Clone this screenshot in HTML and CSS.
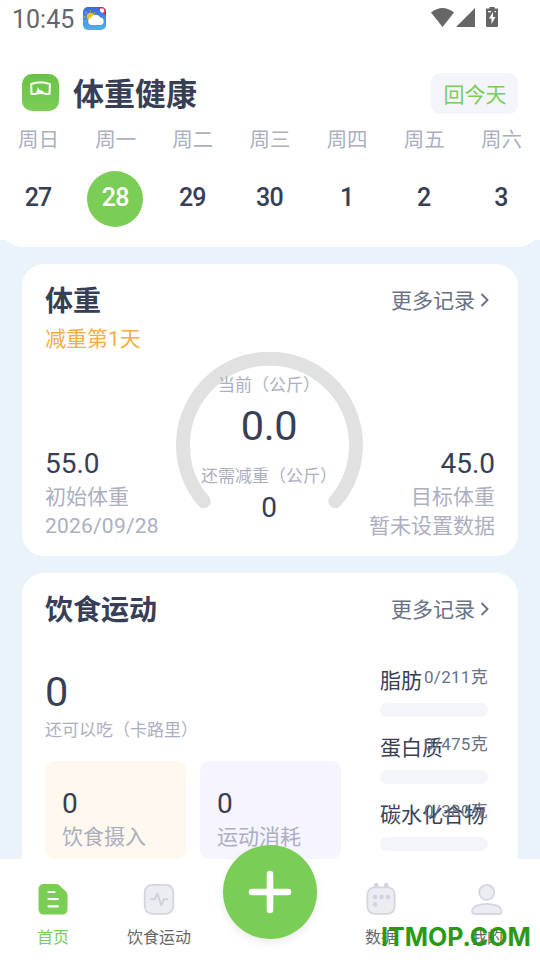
FILE: index.html
```html
<!DOCTYPE html>
<html lang="zh-CN">
<head>
<meta charset="utf-8">
<title>体重健康</title>
<link rel="stylesheet" href="styles.css">
</head>
<body>
<div class="app">
  <header class="top">
    <div class="status">
      <span class="clock">10:45</span>
      <svg class="weather" width="23" height="23" viewBox="0 0 23 23">
        <defs>
          <linearGradient id="sky" x1="0" y1="0" x2="0" y2="1"><stop offset="0" stop-color="#3a68e6"/><stop offset="1" stop-color="#4fb2f3"/></linearGradient>
          <clipPath id="tile"><rect width="23" height="23" rx="5"/></clipPath>
        </defs>
        <g clip-path="url(#tile)">
          <rect width="23" height="23" fill="url(#sky)"/>
          <path d="M14.500 0H23v9z" fill="#e3203a"/>
          <path d="M17 1.500h3.500l1 3-2 1.500-2.500-1.500z" fill="#fff"/>
          <circle cx="7.500" cy="9.500" r="3.700" fill="#f6c400"/>
          <path d="M7.500 3.200v1.300M2.600 5l1 1M1 9.800h1.500M2.300 14.500l1.200-1M11.800 5.200l-.8.8" stroke="#e0b62a" stroke-width="1.100"/>
          <path d="M8.500 18a3.500 3.500 0 0 1-.6-6.900A5.200 5.200 0 0 1 17.400 10.600 3.800 3.800 0 0 1 18 18z" fill="#fff"/>
        </g>
      </svg>
      <svg class="signals" width="70" height="21" viewBox="0 0 70 21">
        <g fill="#666">
          <path d="M0 5.500Q11.500-3.500 23 5.500L11.500 20z"/>
          <path d="M44 1v19H25z"/>
          <path d="M58.500 0h5v1.500H66a1 1 0 0 1 1 1V19a1 1 0 0 1-1 1H56a1 1 0 0 1-1-1V2.500a1 1 0 0 1 1-1h2.500z"/>
        </g>
        <path d="M62 5v5h2.500L60.500 17v-5.500H58zM57 4h3v1.200h-3zM63.500 4h1.500v1.200h-1.500z" fill="#fff"/>
      </svg>
    </div>
    <div class="brand">
      <svg class="logo" width="37" height="37" viewBox="0 0 37 37">
        <defs><linearGradient id="leaf" x1="0" y1="0" x2="0" y2="1"><stop offset="0" stop-color="#68c344"/><stop offset="1" stop-color="#7bce58"/></linearGradient></defs>
        <rect width="37" height="37" rx="10" fill="url(#leaf)"/>
        <path d="M9.100 10Q18.500 6.900 27.900 10L27.500 20H24Q18.500 17.800 13 20H9.500z" fill="none" stroke="#f1faec" stroke-width="2.200" stroke-linejoin="round"/>
        <path d="M14 18L15.300 16.300 15.700 13 18 16.200 20.500 16.800 21.500 18z" fill="#fff"/>
      </svg>
      <h1>体重健康</h1>
      <button class="today">回今天</button>
    </div>
    <div class="week">
      <div class="day"><span>周日</span><b>27</b></div>
      <div class="day active"><span>周一</span><b>28</b></div>
      <div class="day"><span>周二</span><b>29</b></div>
      <div class="day"><span>周三</span><b>30</b></div>
      <div class="day"><span>周四</span><b>1</b></div>
      <div class="day"><span>周五</span><b>2</b></div>
      <div class="day"><span>周六</span><b>3</b></div>
    </div>
  </header>

  <main class="content">
    <section class="card weight">
      <div class="card-head">
        <h2>体重</h2>
        <a class="more">更多记录<svg width="10" height="14" viewBox="0 0 10 14"><path d="M1.500 1l6 6-6 6" fill="none" stroke="#697186" stroke-width="1.900"/></svg></a>
      </div>
      <div class="streak">减重第1天</div>
      <div class="weight-row">
        <div class="side">
          <span class="num">55.0</span>
          <span class="cap">初始体重</span>
          <span class="cap date">2026/09/28</span>
        </div>
        <div class="gauge">
          <svg class="arc" width="188" height="160" viewBox="0 0 188 160"><path d="M27.700 149.300A86.500 86.500 0 1 1 159.300 149.300" fill="none" stroke="#e1e1e1" stroke-width="14" stroke-linecap="round"/></svg>
          <div class="gauge-text">
            <span class="small">当前（公斤）</span>
            <span class="big">0.0</span>
            <span class="small second">还需减重（公斤）</span>
            <span class="num left">0</span>
          </div>
        </div>
        <div class="side right">
          <span class="num">45.0</span>
          <span class="cap">目标体重</span>
          <span class="cap">暂未设置数据</span>
        </div>
      </div>
    </section>

    <section class="card diet">
      <div class="card-head">
        <h2>饮食运动</h2>
        <a class="more">更多记录<svg width="10" height="14" viewBox="0 0 10 14"><path d="M1.500 1l6 6-6 6" fill="none" stroke="#697186" stroke-width="1.900"/></svg></a>
      </div>
      <div class="diet-row">
        <div class="energy">
          <span class="big">0</span>
          <span class="small">还可以吃（卡路里）</span>
          <div class="tiles">
            <div class="tile intake"><span class="num">0</span><span class="cap">饮食摄入</span></div>
            <div class="tile burn"><span class="num">0</span><span class="cap">运动消耗</span></div>
          </div>
        </div>
        <div class="macros">
          <div class="macro"><span class="name">脂肪</span><span class="value">0/211克</span><div class="bar"></div></div>
          <div class="macro"><span class="name">蛋白质</span><span class="value">0/475克</span><div class="bar"></div></div>
          <div class="macro"><span class="name">碳水化合物</span><span class="value">0/380克</span><div class="bar"></div></div>
        </div>
      </div>
    </section>
  </main>

  <nav class="tabs">
    <a class="tab on">
      <svg width="32" height="34" viewBox="0 0 32 34"><path d="M7 2H18.500Q21 2 22.500 3.400L29 9.500Q30.500 11 30.500 13V27Q30.500 32.500 25 32.500H7Q1.500 32.500 1.500 27V7.500Q1.500 2 7 2z" fill="#7acd55"/><path d="M11.500 10h6M11.500 17h9.500M11.500 24.300h9.500" stroke="#fff" stroke-width="2.200" stroke-linecap="round"/></svg>
      <span>首页</span>
    </a>
    <a class="tab">
      <svg width="32" height="34" viewBox="0 0 32 34"><rect x="1.700" y="2.800" width="28.600" height="29" rx="7.500" fill="#ecedf3" stroke="#d3d5e1" stroke-width="1.800"/><path d="M8 17.300h3.600l2.700-6 4 12 2.600-6h3.400" fill="none" stroke="#cfd1de" stroke-width="2" stroke-linecap="round" stroke-linejoin="round"/></svg>
      <span>饮食运动</span>
    </a>
    <div class="fab-slot">
      <button class="fab"><svg width="44" height="44" viewBox="0 0 44 44"><path d="M22 4v36M4 22h36" stroke="#fff" stroke-width="6.600" stroke-linecap="round"/></svg></button>
    </div>
    <a class="tab">
      <svg width="32" height="34" viewBox="0 0 32 34"><path d="M11.300 3v5M21.300 3v5" stroke="#d3d5e1" stroke-width="4.600" stroke-linecap="round"/><rect x="2.400" y="5.400" width="27.200" height="26.400" rx="7" fill="#ecedf3" stroke="#d3d5e1" stroke-width="1.800"/><g fill="#d0d2df"><circle cx="10" cy="15" r="2.300"/><circle cx="16.500" cy="15" r="2.300"/><circle cx="23" cy="15" r="2.300"/><circle cx="10" cy="22.400" r="2.300"/></g></svg>
      <span>数据</span>
    </a>
    <a class="tab">
      <svg width="32" height="34" viewBox="0 0 32 34"><g fill="#ecedf3" stroke="#d3d5e1" stroke-width="1.800"><circle cx="15.700" cy="10.300" r="7.500"/><path d="M4 32Q1 32 1.200 28.500C1.600 24.500 8 21.800 15.800 21.800S30 24.500 30.400 28.500Q30.600 32 27.600 32z"/></g></svg>
      <span>我的</span>
    </a>
    <div class="mark">ITMOP.COM</div>
  </nav>
</div>
</body>
</html>
```
FILE: styles.css
```css
* { box-sizing: border-box; margin: 0; padding: 0; }

body {
  width: 540px;
  height: 960px;
  overflow: hidden;
  background: #fff;
  color: #373e55;
  font-family: Roboto, "Noto Sans CJK SC", sans-serif;
}

svg { display: block; flex: none; }
button { border: 0; font-family: inherit; }

.app {
  display: flex;
  flex-direction: column;
  height: 960px;
  background: linear-gradient(#fff 240px, #eaf3fa 240px);
}

/* Header */
.top {
  height: 247px;
  flex: none;
  background: #fff;
  border-radius: 0 0 22px 22px;
}
.status {
  display: flex;
  height: 73px;
  padding: 7px 39px 0 12px;
}
.clock {
  width: 71px;
  font-size: 25px;
  line-height: 25px;
  color: #666;
}
.signals { margin-left: auto; }
.brand {
  display: flex;
  height: 41px;
  padding: 0 22px;
}
.logo { margin-top: 1px; }
.brand h1 {
  margin-left: 14px;
  font-size: 31px;
  font-weight: 700;
  line-height: 43px;
}
.today {
  width: 87px;
  height: 41px;
  margin-left: auto;
  padding: 3px 0 0 1px;
  border-radius: 9px;
  background: #f4f5fa;
  color: #7acd55;
  font-size: 21px;
  line-height: 38px;
}
.week { display: flex; }
.day {
  display: flex;
  flex-direction: column;
  align-items: center;
  width: 77.200px;
  height: 113px;
}
.day span {
  font-size: 20.500px;
  line-height: 52px;
  color: #abafc0;
}
.day b {
  width: 56px;
  height: 56px;
  margin: 5px 1px 0 0;
  border-radius: 50%;
  font-size: 25px;
  font-weight: 500;
  letter-spacing: -.8px;
  line-height: 53px;
  text-align: center;
}
.day.active b { background: #7acd55; color: #fff; }

/* Cards */
.content {
  display: flex;
  flex-direction: column;
  gap: 17px;
  height: 612px;
  padding: 17px 22px 0;
  overflow: hidden;
}
.card {
  flex: none;
  padding: 0 23px;
  border-radius: 22px;
  background: #fff;
}
.weight { height: 292px; }
.diet { height: 330px; }
.card-head {
  display: flex;
  justify-content: space-between;
  height: 62px;
  padding-top: 14px;
}
h2 {
  font-size: 28px;
  font-weight: 700;
  line-height: 48px;
}
.more {
  display: flex;
  align-items: center;
  gap: 5px;
  height: 46px;
  padding-right: 5px;
  font-size: 21px;
  line-height: 46px;
  color: #697186;
}
.more svg { margin-bottom: 2px; }
.streak {
  height: 26px;
  font-size: 21px;
  line-height: 27px;
  color: #f5ad42;
}
.weight-row { display: flex; height: 200px; }
.side {
  display: flex;
  flex-direction: column;
  width: 131px;
  padding-top: 95px;
}
.right { align-items: flex-end; }
.num { font-size: 28px; line-height: 34px; }
.cap {
  font-size: 21px;
  line-height: 33px;
  color: #abafc0;
  white-space: nowrap;
}
.side .cap + .cap { line-height: 25px; }
.date { letter-spacing: .2px; }
.big { font-size: 41.500px; line-height: 50px; }
.small { font-size: 17px; line-height: 24px; color: #abafc0; }
.gauge { position: relative; width: 188px; height: 160px; }
.arc { position: absolute; inset: 0; }
.gauge-text {
  position: relative;
  display: flex;
  flex-direction: column;
  align-items: center;
  padding: 21px 2px 0 0;
}
.gauge-text .big { height: 56px; line-height: 58px; letter-spacing: -.3px; }
.second { margin-top: 11px; }
.gauge-text .num { line-height: 40px; }

.diet-row { display: flex; justify-content: space-between; }
.energy {
  display: flex;
  flex-direction: column;
  width: 296px;
  padding-top: 32px;
}
.energy .small { padding-top: 1px; }
.tiles { display: flex; gap: 14px; margin-top: 19px; }
.tile {
  display: flex;
  flex-direction: column;
  width: 141px;
  height: 98px;
  padding: 26px 17px 0;
  border-radius: 9px;
}
.intake { background: #fff8ee; }
.burn { background: #f5f4ff; }
.macros { width: 108px; margin-right: 7px; padding-top: 30px; }
.macro { position: relative; height: 67px; padding-top: 1px; }
.name {
  display: block;
  height: 37px;
  font-size: 21px;
  line-height: 31px;
  white-space: nowrap;
}
.value {
  position: absolute;
  top: 0;
  right: 0;
  font-size: 17px;
  line-height: 25px;
  letter-spacing: .3px;
  color: #697186;
}
.bar { height: 14px; border-radius: 7px; background: #f4f5fa; }

/* Bottom tabs */
.tabs {
  position: relative;
  display: flex;
  justify-content: center;
  height: 101px;
  background: #fff;
}
.tab {
  display: flex;
  flex-direction: column;
  align-items: center;
  width: 106px;
  padding-top: 23px;
  font-size: 16px;
  line-height: 44px;
  color: #666;
}
.on { color: #7acd55; }
.fab-slot { display: flex; justify-content: center; width: 116px; }
.fab {
  display: flex;
  align-items: center;
  justify-content: center;
  width: 94px;
  height: 94px;
  margin-top: -14.500px;
  border-radius: 50%;
  background: #7acd55;
  box-shadow: 0 4px 9px rgba(0, 0, 0, .08);
}
.mark {
  position: absolute;
  top: 61px;
  left: 381px;
  font-family: Inter, sans-serif;
  font-size: 25px;
  font-weight: 700;
  line-height: 34px;
  color: #2a9a13;
}
```
